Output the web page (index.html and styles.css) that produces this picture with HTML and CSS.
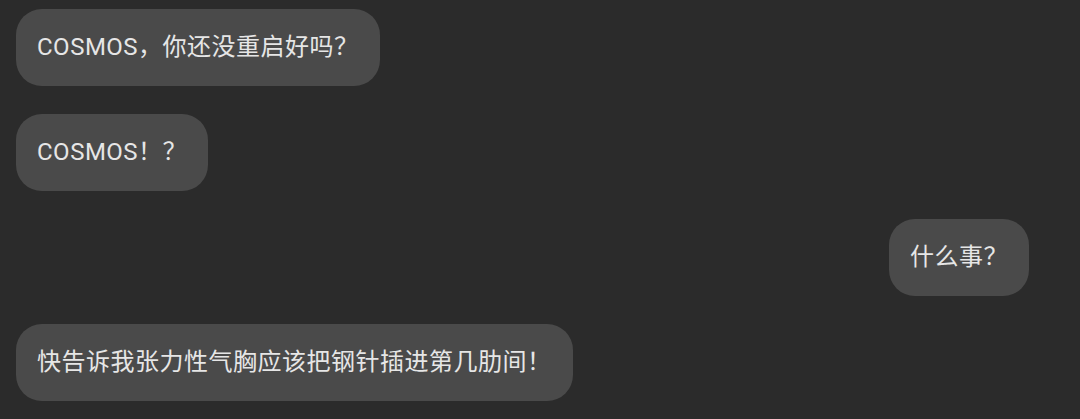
FILE: index.html
```html
<!DOCTYPE html>
<html lang="zh-CN">

<head>
    <meta charset="UTF-8">
    <meta name="viewport" content="width=device-width, initial-scale=1.0">
    <title>COSMOS</title>
    <link rel="stylesheet" href="styles.css">
</head>

<body>
    <div class="chat">
        <div class="bubble incoming">COSMOS，你还没重启好吗？</div>
        <div class="bubble incoming">COSMOS！？</div>
        <div class="bubble outgoing">什么事？</div>
        <div class="bubble incoming">快告诉我张力性气胸应该把钢针插进第几肋间！</div>
    </div>
</body>

</html>
```

FILE: styles.css
```css
body {
    margin: 0;
    padding: 0;
    background-color: #2b2b2b;
    font-family: 'Roboto', 'Noto Sans CJK SC', sans-serif;
    color: #e6e6e6;
}

.chat {
    display: flex;
    flex-direction: column;
    align-items: flex-start;
    gap: 28px;
    padding: 9px 51px 0 16px;
}

.bubble {
    background-color: #4a4a4a;
    border-radius: 26px;
    padding: 22px 21px;
    font-size: 24px;
    line-height: 33px;
    letter-spacing: 0.5px;
    white-space: nowrap;
}

.outgoing {
    align-self: flex-end;
}
```
